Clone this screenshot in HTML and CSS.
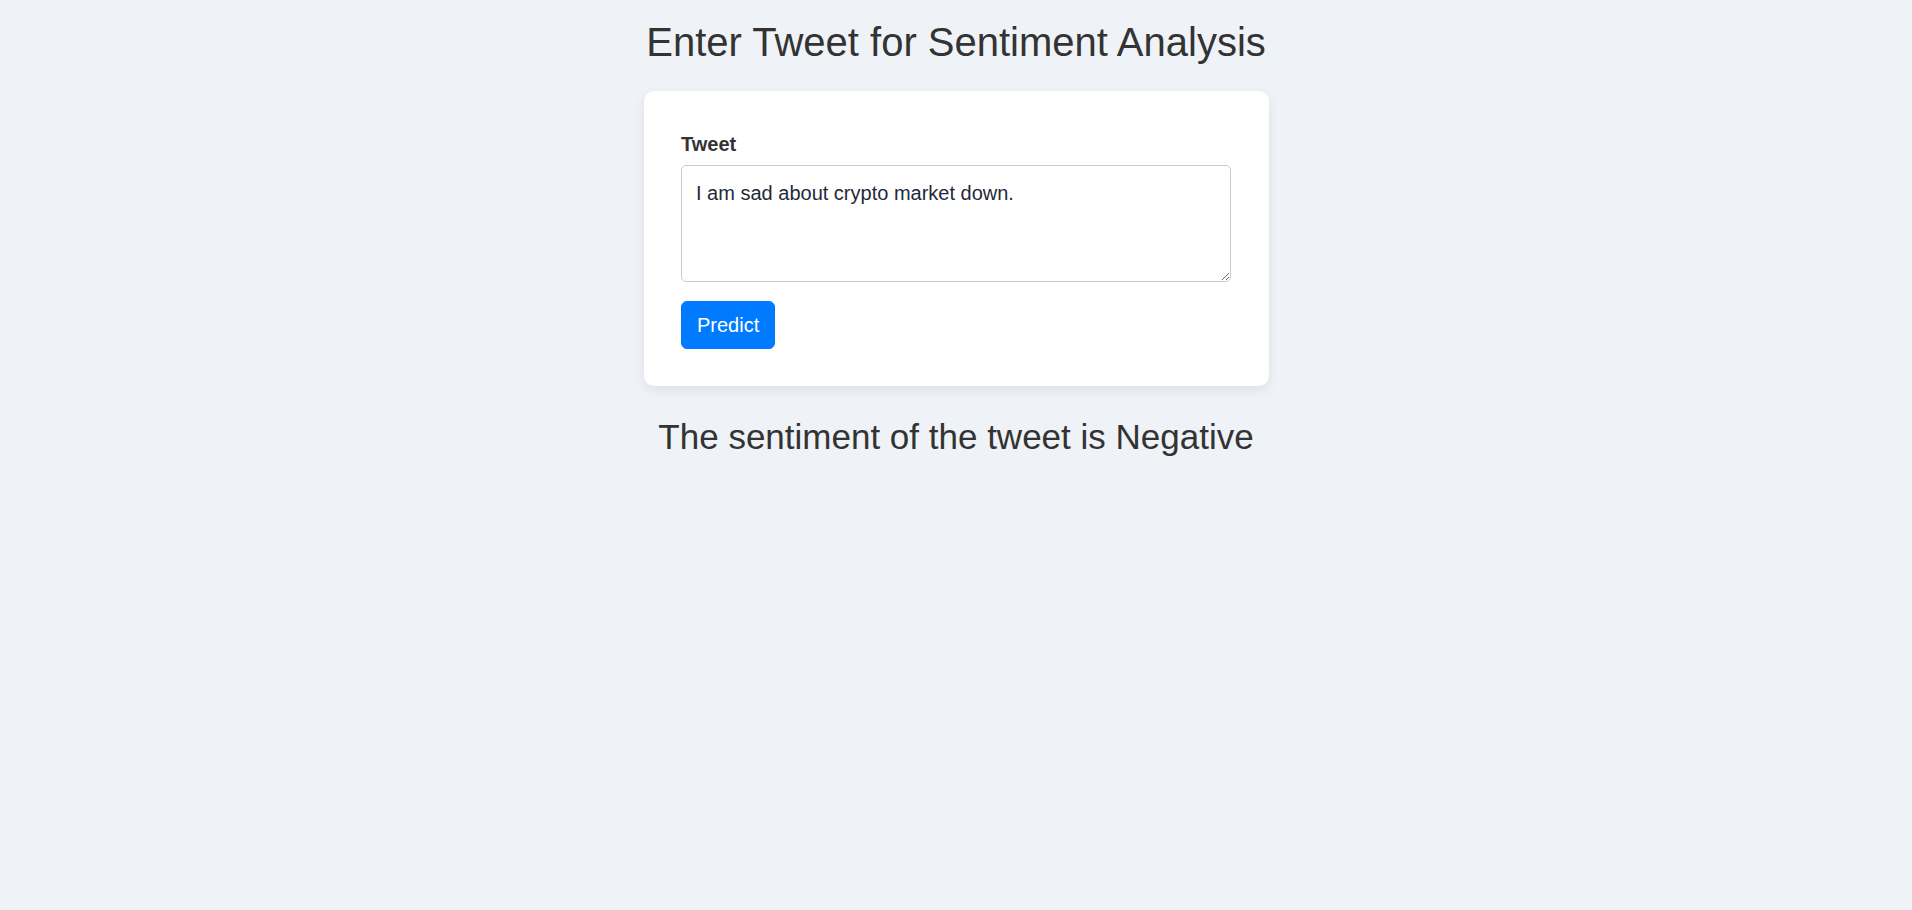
FILE: index.html
```html
<!DOCTYPE html>
<html lang="en">
<head>
<meta charset="utf-8">
<title>Tweet Sentiment Analysis</title>
<link rel="stylesheet" href="styles.css">
</head>
<body>
<main class="page">
  <h1 class="title">Enter Tweet for Sentiment Analysis</h1>
  <form class="card">
    <label class="field-label" for="tweet">Tweet</label>
    <textarea class="field-input" id="tweet" rows="3">I am sad about crypto market down.</textarea>
    <button type="button" class="btn-primary">Predict</button>
  </form>
  <h2 class="result">The sentiment of the tweet is Negative</h2>
</main>
</body>
</html>
```

FILE: styles.css
```css
html, body {
  margin: 0;
  padding: 0;
}
body {
  background: #eff2f7;
  color: #333333;
  font-family: "Liberation Sans", Arial, Helvetica, sans-serif;
}
.page {
  display: flex;
  flex-direction: column;
  align-items: center;
}
.title {
  font-size: 40px;
  font-weight: 400;
  line-height: 48px;
  margin: 18px 0 25px;
  text-align: center;
}
.card {
  width: 625px;
  box-sizing: border-box;
  padding: 37.5px;
  background: #ffffff;
  border-radius: 10px;
  box-shadow: 0 4px 12px rgba(0, 0, 0, 0.08);
  display: flex;
  flex-direction: column;
  align-items: flex-start;
}
.field-label {
  display: block;
  font-weight: 700;
  font-size: 20px;
  line-height: 30px;
  margin-bottom: 6px;
}
.field-input {
  display: block;
  width: 100%;
  box-sizing: border-box;
  font-family: "Liberation Sans", Arial, Helvetica, sans-serif;
  font-size: 20px;
  line-height: 30px;
  padding: 12.5px 14px;
  border: 1px solid #cccccc;
  border-radius: 5px;
  color: #1f2a3a;
  background: #ffffff;
  margin: 0 0 19px;
}
.btn-primary {
  font-family: "Liberation Sans", Arial, Helvetica, sans-serif;
  font-size: 20px;
  line-height: 30px;
  padding: 8px 15px;
  border: 1px solid #007bff;
  background: #007bff;
  color: #ffffff;
  border-radius: 6px;
  cursor: pointer;
}
.result {
  font-size: 35px;
  font-weight: 400;
  line-height: 42px;
  margin: 30px 0 0;
  text-align: center;
}
```
